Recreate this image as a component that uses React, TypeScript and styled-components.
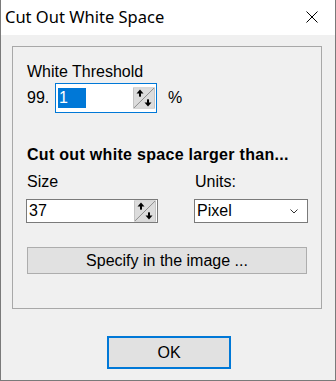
import styled, { createGlobalStyle } from "styled-components";

const GlobalStyle = createGlobalStyle`
  html, body {
    margin: 0;
    padding: 0;
    background: #f0f0f0;
  }
  * {
    box-sizing: border-box;
  }
`

const SpinIcon = () => (
  <svg width="22" height="24" viewBox="0 0 22 24">
    <rect x="0.5" y="0.5" width="21" height="23" fill="#dcdcdc" stroke="#c4c4c4" />
    <line x1="1" y1="23" x2="21" y2="1" stroke="#8a8a8a" strokeWidth="1" />
    <path d="M7 2.5 L10.5 7 L3.5 7 Z" fill="#000" />
    <rect x="6" y="6.5" width="2" height="4" fill="#000" />
    <path d="M15 21.5 L18.5 17 L11.5 17 Z" fill="#000" />
    <rect x="14" y="13.5" width="2" height="4" fill="#000" />
  </svg>
)

export default function App() {
  return (
    <>
      <GlobalStyle />
      <Window>
        <TitleBar>
          <Title>Cut Out White Space</Title>
          <CloseBtn>
            <svg width="12" height="12" viewBox="0 0 12 12">
              <path d="M0.5 0.5 L11.5 11.5 M11.5 0.5 L0.5 11.5" stroke="#000" strokeWidth="1" />
            </svg>
          </CloseBtn>
        </TitleBar>

        <Body>
          <GroupBox>
            <Label>White Threshold</Label>
            <ThresholdRow>
              <span>99.</span>
              <SpinBox $focused>
                <Selected>1</Selected>
                <SpinBtn><SpinIcon /></SpinBtn>
              </SpinBox>
              <Percent>%</Percent>
            </ThresholdRow>

            <Heading>Cut out white space larger than...</Heading>

            <FieldGrid>
              <Label>Size</Label>
              <Label>Units:</Label>
              <SpinBox>
                <FieldText>37</FieldText>
                <SpinBtn><SpinIcon /></SpinBtn>
              </SpinBox>
              <Select>
                <FieldText>Pixel</FieldText>
                <svg width="8" height="5" viewBox="0 0 8 5">
                  <path d="M0.5 0.5 L4 4 L7.5 0.5" stroke="#333" strokeWidth="1" fill="none" />
                </svg>
              </Select>
            </FieldGrid>

            <SpecifyBtn>Specify in the image ...</SpecifyBtn>
          </GroupBox>

          <Footer>
            <OkBtn>OK</OkBtn>
          </Footer>
        </Body>
      </Window>
    </>
  )
}

const Window = styled.div`
  width: 336px;
  height: 381px;
  display: flex;
  flex-direction: column;
  border: 1px solid #7a7a7a;
  border-top: none;
  background: #f0f0f0;
  font-family: "Liberation Sans", Arial, sans-serif;
  font-size: 16px;
  color: #000;
`

const TitleBar = styled.div`
  height: 35px;
  flex: none;
  display: flex;
  align-items: center;
  justify-content: space-between;
  background: #fff;
  padding-left: 4px;
`

const Title = styled.div`
  font-family: "Noto Sans", "Open Sans", sans-serif;
  font-size: 16.5px;
  line-height: 20px;
  padding-bottom: 2px;
`

const CloseBtn = styled.div`
  width: 46px;
  height: 35px;
  display: flex;
  align-items: center;
  justify-content: center;
  padding-bottom: 2px;
`

const Body = styled.div`
  flex: 1;
  display: flex;
  flex-direction: column;
  padding: 11px 13px 0 11px;
`

const GroupBox = styled.div`
  height: 263px;
  border: 1px solid #a8a8a8;
  padding: 16px 14px 0 13px;
  display: flex;
  flex-direction: column;
`

const Label = styled.div`
  line-height: 18px;
  padding-left: 1px;
`

const ThresholdRow = styled.div`
  margin-top: 2px;
  display: flex;
  align-items: center;
  padding-left: 1px;

  span {
    width: 28px;
  }
`

const SpinBox = styled.div<{ $focused?: boolean }>`
  width: ${p => (p.$focused ? "102px" : "132px")};
  height: ${p => (p.$focused ? "30px" : "24px")};
  border: 1px solid ${p => (p.$focused ? "#0078d7" : "#7a7a7a")};
  background: #fff;
  display: flex;
  align-items: center;
  justify-content: space-between;
  padding: 0 1px 0 2px;
`

const Selected = styled.span`
  background: #0078d7;
  color: #fff;
  height: 20px;
  line-height: 20px;
  padding: 0 1px;
`

const SpinBtn = styled.div`
  width: 22px;
  height: 24px;
  display: flex;
  transform: scaleY(0.9);
`

const Percent = styled.span`
  margin-left: 11px;
`

const Heading = styled.div`
  margin-top: 33px;
  font-weight: bold;
  line-height: 18px;
  letter-spacing: 0.3px;
  padding-left: 1px;
`

const FieldGrid = styled.div`
  margin-top: 9px;
  display: grid;
  grid-template-columns: 132px 114px;
  column-gap: 36px;
  row-gap: 8px;
`

const FieldText = styled.span`
  line-height: 20px;
`

const Select = styled.div`
  height: 24px;
  border: 1px solid #7a7a7a;
  background: #fff;
  display: flex;
  align-items: center;
  justify-content: space-between;
  padding: 0 9px 0 2px;
`

const SpecifyBtn = styled.div`
  margin: 24px 0 0 1px;
  width: 280px;
  height: 27px;
  background: #e1e1e1;
  border: 1px solid #adadad;
  display: flex;
  align-items: center;
  justify-content: center;
`

const Footer = styled.div`
  margin-top: 27px;
  padding-left: 95px;
  display: flex;
`

const OkBtn = styled.div`
  width: 124px;
  height: 33px;
  background: #e1e1e1;
  border: 2px solid #0078d7;
  display: flex;
  align-items: center;
  justify-content: center;
`
